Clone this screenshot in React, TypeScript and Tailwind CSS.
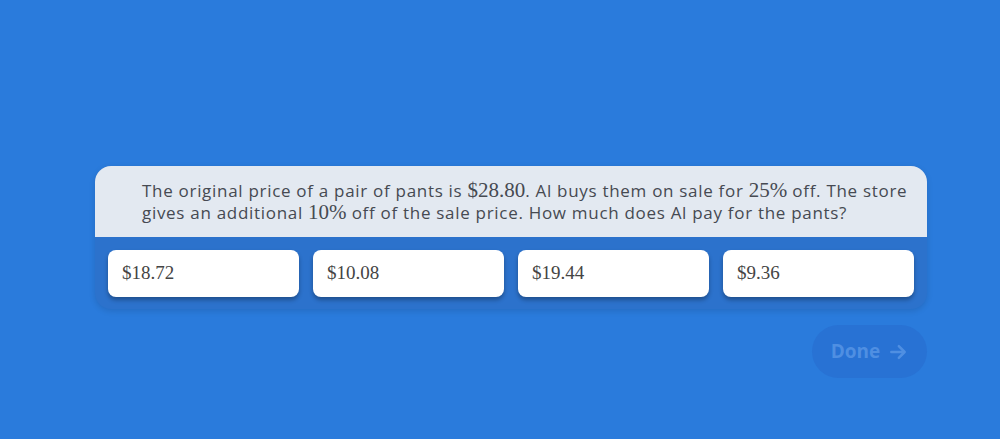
import React from 'react';

const answers = ['$18.72', '$10.08', '$19.44', '$9.36'];

function M({ children }: { children: React.ReactNode }) {
  return <span className="font-['Liberation_Serif','DejaVu_Serif',serif] text-[21px] leading-none tracking-normal">{children}</span>;
}

export default function App() {
  return (
    <div className="w-[1000px] h-[439px] bg-[#2a7bdc] flex flex-col items-start pl-[95px] pt-[166px]">
      <div className="w-[832px] rounded-2xl bg-[#2c72cc] shadow-[0_2px_6px_rgba(0,0,0,0.12)] overflow-hidden">
        {/* Question */}
        <div className="bg-[#e3e9f1] pl-[47px] pr-[16px] pt-[14px] pb-[13px] text-[17px] leading-[22px] text-[#464a52] font-['Open_Sans','Noto_Sans',sans-serif] tracking-[0.7px] whitespace-nowrap">
          The original price of a pair of pants is <M>$28.80</M>. Al buys them on sale for <M>25%</M> off. The store
          <br />
          gives an additional <M>10%</M> off of the sale price. How much does Al pay for the pants?
        </div>
        {/* Answers */}
        <div className="grid grid-cols-4 gap-[14px] px-[13px] pt-[13px] pb-[12px]">
          {answers.map((a) => (
            <button
              key={a}
              className="h-[47px] bg-white rounded-lg text-left px-[14px] text-[19px] text-[#444] font-['Liberation_Serif','DejaVu_Serif',serif] shadow-[0_3px_4px_rgba(0,0,0,0.3)]"
            >
              {a}
            </button>
          ))}
        </div>
      </div>
      <div className="w-[832px] flex justify-end mt-[16px]">
        <button className="h-[53px] w-[115px] rounded-full bg-[#2872d4] text-[#4f8fe2] font-['Open_Sans','Noto_Sans',sans-serif] font-bold text-[19px] flex items-center justify-center gap-[8px]">
          Done
          <svg width="20" height="20" viewBox="0 0 24 24" fill="none" stroke="currentColor" strokeWidth="3" strokeLinecap="round" strokeLinejoin="round">
            <path d="M4 12h15" />
            <path d="M13 5l7 7-7 7" />
          </svg>
        </button>
      </div>
    </div>
  );
}
